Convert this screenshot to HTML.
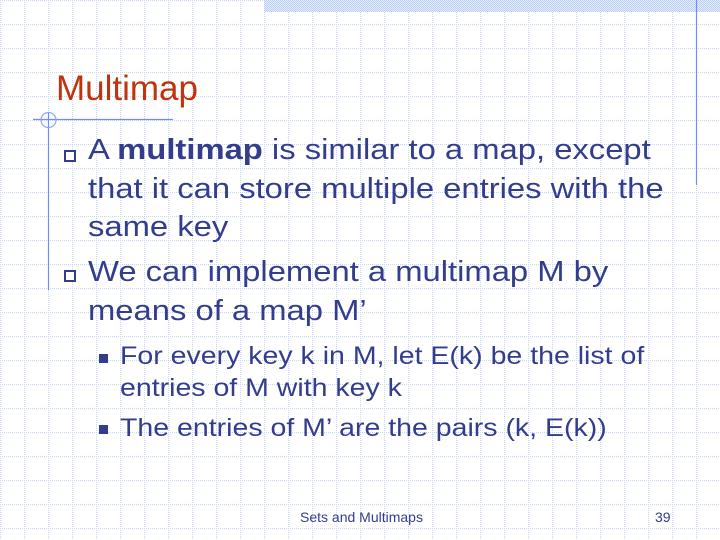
<!DOCTYPE html>
<html><head><meta charset="utf-8"><style>
html,body{margin:0;padding:0}
body{width:720px;height:540px;position:relative;overflow:hidden;background:#fff;
font-family:"Liberation Sans","DejaVu Sans",sans-serif;color:#333d8c}
.grid{position:absolute;left:0;top:0}
.t{position:absolute;white-space:nowrap;line-height:1}
.b{font-size:29px;transform:scaleX(1.13);transform-origin:0 0}
.s{font-size:25px;transform:scaleX(1.14);transform-origin:0 0}
.box{position:absolute;width:8px;height:8px;border:2px solid #333d8c;background:#fff}
.sq{position:absolute;width:9px;height:9px;background:#333d8c}
</style></head><body>
<svg class="grid" width="720" height="540">
<defs>
<pattern id="g" width="24" height="24" patternUnits="userSpaceOnUse">
<line x1="0" y1="0.5" x2="24" y2="0.5" stroke="#c6d6f8" stroke-width="1" stroke-dasharray="1,1"/>
<line x1="0.5" y1="0" x2="0.5" y2="24" stroke="#c6d6f8" stroke-width="1" stroke-dasharray="1,1"/>
</pattern>
<pattern id="c" width="2" height="2" patternUnits="userSpaceOnUse">
<rect width="2" height="2" fill="#e6eefc"/><rect width="1" height="1" fill="#b8ccf4"/><rect x="1" y="1" width="1" height="1" fill="#b8ccf4"/>
</pattern>
</defs>
<rect x="0" y="0" width="720" height="540" fill="url(#g)"/>
<rect x="264" y="0" width="456" height="12" fill="url(#c)"/>
<line x1="696.5" y1="0" x2="696.5" y2="185" stroke="#6f8ef0" stroke-width="1.2"/>
<line x1="33" y1="119.5" x2="173" y2="119.5" stroke="#6f8ef0" stroke-width="1.2"/>
<line x1="48.5" y1="112" x2="48.5" y2="290" stroke="#6f8ef0" stroke-width="1.2"/>
<circle cx="48.5" cy="120" r="7.5" fill="none" stroke="#90a8f0" stroke-width="1.2"/>
</svg>
<div class="t" style="left:56px;top:71px;font-size:35px;color:#c0330c">Multimap</div>

<div class="box" style="left:64px;top:150px"></div>
<div class="t b" style="left:88px;top:136px">A <b>multimap</b> is similar to a map, except</div>
<div class="t b" style="left:88px;top:175px">that it can store multiple entries with the</div>
<div class="t b" style="left:88px;top:213px">same key</div>

<div class="box" style="left:64px;top:270px"></div>
<div class="t b" style="left:88px;top:258px">We can implement a multimap M by</div>
<div class="t b" style="left:88px;top:297px">means of a map M’</div>

<div class="sq" style="left:99px;top:354px"></div>
<div class="t s" style="left:120px;top:344px">For every key k in M, let E(k) be the list of</div>
<div class="t s" style="left:120px;top:376px">entries of M with key k</div>
<div class="sq" style="left:99px;top:425px"></div>
<div class="t s" style="left:120px;top:416px">The entries of M’ are the pairs (k, E(k))</div>

<div class="t" style="left:300px;top:510px;font-size:14px">Sets and Multimaps</div>
<div class="t" style="left:655px;top:510px;font-size:14px">39</div>
</body></html>
